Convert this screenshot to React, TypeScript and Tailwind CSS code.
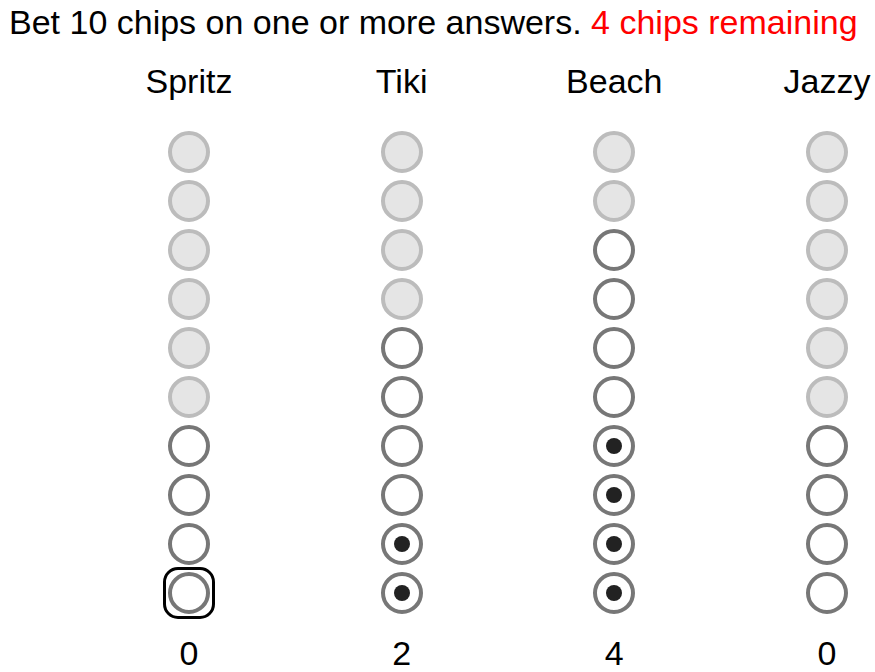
const columns = [
  { name: 'Spritz', bet: 0 },
  { name: 'Tiki', bet: 2 },
  { name: 'Beach', bet: 4 },
  { name: 'Jazzy', bet: 0 },
]

const TOTAL = 10
const remaining = TOTAL - columns.reduce((s, c) => s + c.bet, 0)

function Chip({ state, focused }: { state: 'off' | 'open' | 'on'; focused?: boolean }) {
  return (
    <div className="relative">
      <div
        className={
          state === 'off'
            ? 'w-[42px] h-[42px] rounded-full border-4 border-[#bcbcbc] bg-[#e5e5e5]'
            : 'w-[42px] h-[42px] rounded-full border-4 border-[#777777] bg-white flex items-center justify-center'
        }
      >
        {state === 'on' && <div className="w-4 h-4 rounded-full bg-[#222222]" />}
      </div>
      {focused && <div className="absolute -inset-[5px] rounded-[15px] border-[3px] border-black" />}
    </div>
  )
}

export default function App() {
  return (
    <div className="bg-white min-h-screen text-black overflow-hidden" style={{ fontFamily: '"Liberation Sans", Arial, sans-serif' }}>
      <p className="pt-[3px] pl-[9px] text-[34px] leading-[38px] whitespace-nowrap">
        Bet 10 chips on one or more answers. <span className="text-[#ff0000]">{remaining} chips remaining</span>
      </p>
      <div className="flex justify-between ml-[141px] mt-[21px]">
        {columns.map((col, ci) => {
          const firstOpen = TOTAL - col.bet - remaining
          return (
            <div key={col.name} className="w-[96px] shrink-0 flex flex-col items-center">
              <div className="text-[34px] leading-[38px] whitespace-nowrap">{col.name}</div>
              <div className="mt-[31px] flex flex-col gap-[7px]">
                {Array.from({ length: TOTAL }, (_, r) => {
                  const state = r >= TOTAL - col.bet ? 'on' : r >= firstOpen ? 'open' : 'off'
                  return <Chip key={r} state={state} focused={ci === 0 && r === TOTAL - 1} />
                })}
              </div>
              <div className="mt-[20px] text-[34px] leading-[38px]">{col.bet}</div>
            </div>
          )
        })}
      </div>
    </div>
  )
}
